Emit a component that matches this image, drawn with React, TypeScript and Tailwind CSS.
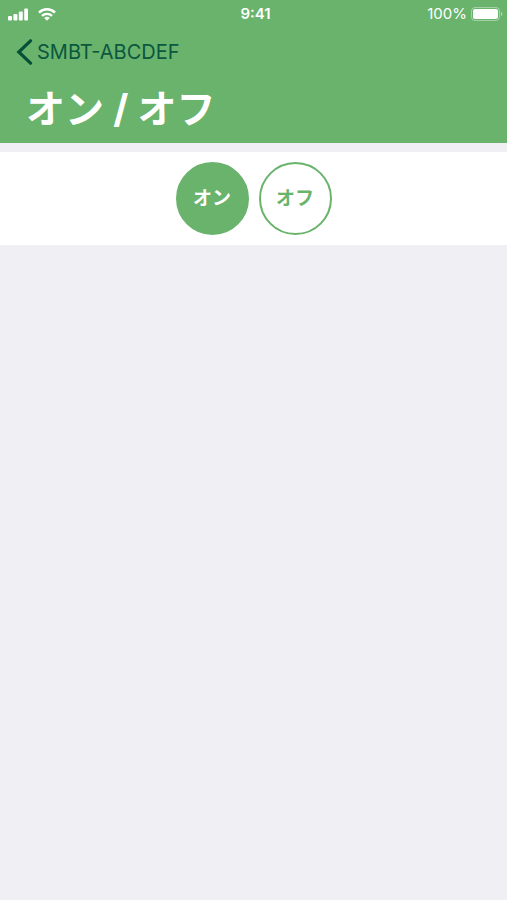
import { useState } from 'react';

type Power = 'on' | 'off';

const OPTIONS: { value: Power; label: string }[] = [
  { value: 'on', label: 'オン' },
  { value: 'off', label: 'オフ' },
];

function SignalIcon() {
  return (
    <svg width="20" height="13" viewBox="0 0 20 13" fill="currentColor" aria-hidden="true">
      <rect x="0" y="8" width="4" height="4.5" rx="1" />
      <rect x="5.4" y="6" width="4" height="6.5" rx="1" />
      <rect x="10.8" y="3.5" width="4" height="9" rx="1" />
      <rect x="16.2" y="0.5" width="3.8" height="12" rx="1" />
    </svg>
  );
}

function WifiIcon() {
  return (
    <svg width="18" height="13" viewBox="0 0 18 13" fill="none" stroke="currentColor" aria-hidden="true">
      <path d="M1 4.6a11.4 11.4 0 0 1 16 0" strokeWidth="2.5" />
      <path d="M4 7.8a7.2 7.2 0 0 1 10 0" strokeWidth="2.3" />
      <path d="M9 12.8 6.2 10a4 4 0 0 1 5.6 0Z" fill="currentColor" stroke="none" />
    </svg>
  );
}

function BatteryIcon() {
  return (
    <svg width="32" height="14" viewBox="0 0 32 14" fill="none" aria-hidden="true">
      <rect x="0.5" y="0.5" width="28" height="13" rx="3.5" stroke="currentColor" strokeOpacity="0.4" />
      <rect x="2" y="2" width="25" height="10" rx="2" fill="currentColor" />
      <path d="M30 4.8c1.8.8 1.8 3.6 0 4.4Z" fill="currentColor" fillOpacity="0.5" />
    </svg>
  );
}

function StatusBar() {
  return (
    <div className="grid h-7 grid-cols-3 items-center pr-1 pl-2 text-[15px] text-white">
      <div className="flex items-center gap-2.5">
        <SignalIcon />
        <WifiIcon />
      </div>
      <span className="text-center font-semibold">9:41</span>
      <div className="flex items-center justify-end gap-1">
        <span>100%</span>
        <BatteryIcon />
      </div>
    </div>
  );
}

export default function App() {
  const [power, setPower] = useState<Power>('on');

  return (
    <div className="min-h-screen bg-[#efeff4] font-['Inter','Noto_Sans_CJK_JP',sans-serif]">
      <header className="bg-[#69b36c]">
        <StatusBar />
        <nav className="flex h-12 items-center px-4">
          <a href="#devices" className="flex items-center gap-1 text-xl text-[#0b5740]">
            <svg width="17" height="26" viewBox="0 0 17 26" fill="none" aria-hidden="true">
              <path d="M14.5 1.8 2.8 13l11.7 11.2" stroke="#075038" strokeWidth="3.2" strokeLinecap="round" />
            </svg>
            SMBT-ABCDEF
          </a>
        </nav>
        <h1 className="px-6.5 pt-[3px] pb-1 text-[39px] leading-[60px] font-bold text-white">オン / オフ</h1>
      </header>

      {/* 電源の切り替え */}
      <main className="mt-[9px] flex justify-center gap-2.5 bg-white py-2.5">
        {OPTIONS.map(({ value, label }) => (
          <button
            key={value}
            type="button"
            aria-pressed={power === value}
            onClick={() => setPower(value)}
            className={`size-[73px] rounded-full border-2 border-[#69b36c] pt-0.5 text-[19px] font-bold ${
              power === value ? 'bg-[#69b36c] text-white' : 'bg-white text-[#69b36c]'
            }`}
          >
            {label}
          </button>
        ))}
      </main>
    </div>
  );
}
